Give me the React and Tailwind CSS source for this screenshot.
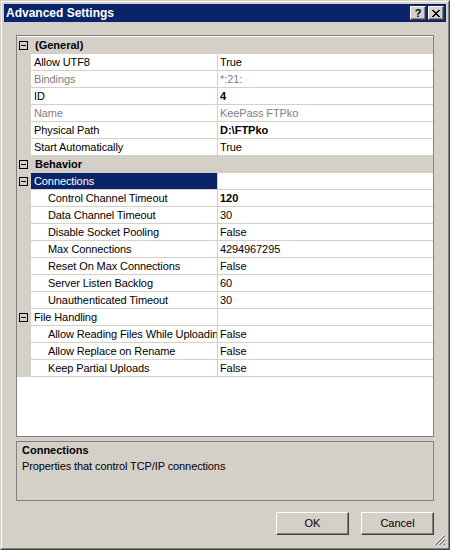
const FONT = { fontFamily: "'Liberation Sans', Arial, sans-serif" };

const groups = [
  {
    title: "(General)",
    items: [
      { name: "Allow UTF8", value: "True" },
      { name: "Bindings", value: "*:21:", readOnly: true },
      { name: "ID", value: "4", bold: true },
      { name: "Name", value: "KeePass FTPko", readOnly: true },
      { name: "Physical Path", value: "D:\\FTPko", bold: true },
      { name: "Start Automatically", value: "True" },
    ],
  },
  {
    title: "Behavior",
    subs: [
      {
        title: "Connections",
        selected: true,
        items: [
          { name: "Control Channel Timeout", value: "120", bold: true },
          { name: "Data Channel Timeout", value: "30" },
          { name: "Disable Socket Pooling", value: "False" },
          { name: "Max Connections", value: "4294967295" },
          { name: "Reset On Max Connections", value: "False" },
          { name: "Server Listen Backlog", value: "60" },
          { name: "Unauthenticated Timeout", value: "30" },
        ],
      },
      {
        title: "File Handling",
        items: [
          { name: "Allow Reading Files While Uploading", value: "False" },
          { name: "Allow Replace on Rename", value: "False" },
          { name: "Keep Partial Uploads", value: "False" },
        ],
      },
    ],
  },
];

function MinusBox() {
  return (
    <span className="flex h-[9px] w-[9px] items-center justify-center border border-black">
      <span className="h-px w-[5px] bg-black" />
    </span>
  );
}

function CategoryRow({ title }) {
  return (
    <div className="flex h-[17px] items-center bg-[#d4d0c8]">
      <div className="flex w-[14px] justify-start pl-[2px]">
        <MinusBox />
      </div>
      <span className="pl-[4px] text-[11px] font-bold leading-[17px] text-black">{title}</span>
    </div>
  );
}

function SubRow({ title, selected }) {
  return (
    <div className="flex h-[17px]">
      <div className="flex w-[14px] items-center bg-[#d4d0c8] pl-[2px]">
        <MinusBox />
      </div>
      <div
        className={`w-[186px] border-b border-[#d4d0c8] pl-[3px] text-[11px] leading-[16px] tracking-[-0.1px] ${
          selected ? "bg-[#0a246a] text-white" : "bg-white text-black"
        }`}
      >
        {title}
      </div>
      <div className="w-px bg-[#d4d0c8]" />
      <div className="flex-1 border-b border-[#d4d0c8] bg-white" />
    </div>
  );
}

function PropRow({ item, indent }) {
  const tone = item.readOnly ? "text-[#808080]" : "text-black";
  return (
    <div className="flex h-[17px]">
      <div className="w-[14px] bg-[#d4d0c8]" />
      <div
        className={`w-[186px] overflow-hidden whitespace-nowrap border-b border-[#d4d0c8] bg-white text-[11px] leading-[16px] tracking-[-0.1px] ${tone} ${
          indent ? "pl-[17px]" : "pl-[3px]"
        }`}
      >
        {item.name}
      </div>
      <div className="w-px bg-[#d4d0c8]" />
      <div
        className={`flex-1 whitespace-nowrap border-b border-[#d4d0c8] bg-white pl-[2px] text-[11px] leading-[16px] ${tone} ${
          item.bold ? "font-bold" : "tracking-[-0.1px]"
        }`}
      >
        {item.value}
      </div>
    </div>
  );
}

function ClassicButton({ children, className = "" }) {
  return (
    <div
      className={`flex items-center justify-center border border-t-white border-l-white border-r-[#404040] border-b-[#404040] bg-[#d4d0c8] shadow-[inset_-1px_-1px_#808080] ${className}`}
    >
      {children}
    </div>
  );
}

export default function App() {
  return (
    <div
      className="relative h-[550px] w-[450px] border border-t-[#d4d0c8] border-l-[#d4d0c8] border-r-[#404040] border-b-[#404040]"
      style={FONT}
    >
      <div className="flex h-full flex-col border border-t-white border-l-white border-r-[#808080] border-b-[#808080] bg-[#d4d0c8] p-[2px]">
        {/* title bar */}
        <div className="flex h-[18px] items-center bg-[#0a246a] pl-[2px] pr-[2px]">
          <span className="flex-1 text-[12px] font-bold text-white">Advanced Settings</span>
          <ClassicButton className="h-[14px] w-[16px] text-[11px] font-bold leading-none text-black">?</ClassicButton>
          <ClassicButton className="ml-[2px] h-[14px] w-[16px]">
            <svg width="8" height="7" viewBox="0 0 8 7" shapeRendering="crispEdges">
              <path d="M0 0h2v1H0zM6 0h2v1H6zM1 1h2v1H1zM5 1h2v1H5zM2 2h4v1H2zM3 3h2v1H3zM2 4h4v1H2zM1 5h2v1H1zM5 5h2v1H5zM0 6h2v1H0zM6 6h2v1H6z" fill="#000" />
            </svg>
          </ClassicButton>
        </div>

        <div className="flex flex-1 flex-col px-[12px]">
          {/* property grid */}
          <div className="mt-[13px] h-[402px] border border-[#808080] bg-white pt-px">
            {groups.map((g) => (
              <div key={g.title}>
                <CategoryRow title={g.title} />
                {g.items && g.items.map((it) => <PropRow key={it.name} item={it} />)}
                {g.subs &&
                  g.subs.map((s) => (
                    <div key={s.title}>
                      <SubRow title={s.title} selected={s.selected} />
                      {s.items.map((it) => (
                        <PropRow key={it.name} item={it} indent />
                      ))}
                    </div>
                  ))}
              </div>
            ))}
          </div>

          {/* description */}
          <div className="mt-[4px] h-[60px] border border-[#808080] bg-[#d4d0c8] px-[5px] pt-0 text-[11px] leading-[16px] text-black">
            <div className="font-bold">Connections</div>
            <div className="tracking-[-0.1px]">Properties that control TCP/IP connections</div>
          </div>

          {/* buttons */}
          <div className="mt-[11px] flex justify-end gap-[12px]">
            <ClassicButton className="h-[23px] w-[73px] text-[11px] text-black">OK</ClassicButton>
            <ClassicButton className="h-[23px] w-[73px] text-[11px] text-black">Cancel</ClassicButton>
          </div>
        </div>
      </div>

      {/* resize grip */}
      <svg className="absolute bottom-[3px] right-[3px]" width="12" height="12" viewBox="0 0 12 12" shapeRendering="crispEdges">
        <path d="M11 0L0 11M11 4L4 11M11 8L8 11" stroke="#ffffff" strokeWidth="1" />
        <path d="M11 1L1 11M11 5L5 11M11 9L9 11" stroke="#808080" strokeWidth="1" />
        <path d="M11 2L2 11M11 6L6 11M11 10L10 11" stroke="#808080" strokeWidth="1" />
      </svg>
    </div>
  );
}
